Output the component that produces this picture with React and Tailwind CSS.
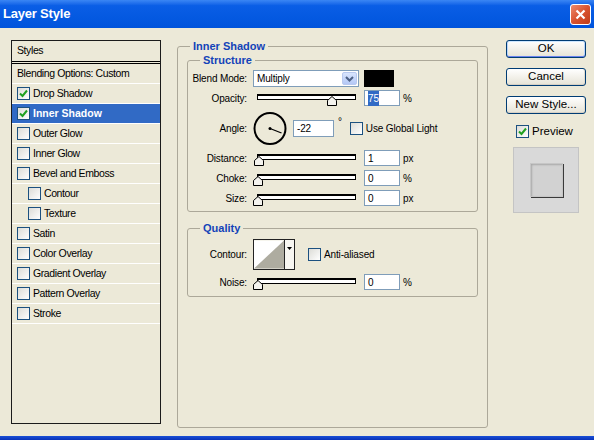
const Check = ({ checked }) => (
  <span className="w-[13px] h-[13px] shrink-0 border border-[#1c5180] bg-linear-to-br from-[#dcdcd7] to-white flex items-center justify-center">
    {checked && (
      <svg width="9" height="9" viewBox="0 0 9 9">
        <path d="M1 4.5 L3.5 7 L8 1.5" stroke="#21a121" strokeWidth="2" fill="none" />
      </svg>
    )}
  </span>
);

const styles = [
  { label: "Drop Shadow", checked: true },
  { label: "Inner Shadow", checked: true, active: true },
  { label: "Outer Glow" },
  { label: "Inner Glow" },
  { label: "Bevel and Emboss" },
  { label: "Contour", sub: true },
  { label: "Texture", sub: true },
  { label: "Satin" },
  { label: "Color Overlay" },
  { label: "Gradient Overlay" },
  { label: "Pattern Overlay" },
  { label: "Stroke" },
];

const Slider = ({ value }) => (
  <div className="relative w-[104px] h-[16px] shrink-0">
    <div className="absolute left-[4px] right-[1px] top-[4px] h-[6px] border border-black border-t-2 bg-white" />
    <svg className="absolute top-[6px]" style={{ left: value * 0.98 }} width="10" height="10" viewBox="0 0 10 10">
      <path d="M0.5 9.5 V4.5 L5 0.5 L9.5 4.5 V9.5 Z" fill="#f4f3ee" stroke="#000" />
    </svg>
  </div>
);

const Field = ({ children }) => (
  <div className="ml-[7px] w-[36px] h-[16px] shrink-0 border border-[#7f9db9] bg-white flex items-center pl-[3px]">
    {children}
  </div>
);

const Row = ({ label, className = "", children }) => (
  <div className={`flex items-center ${className}`}>
    <span className="w-[59px] text-right shrink-0">{label}</span>
    <div className="ml-[6px] flex items-center">{children}</div>
  </div>
);

const SliderRow = ({ label, value, unit, className }) => (
  <Row label={label} className={className}>
    <Slider value={value} />
    <Field>{value}</Field>
    <span className="ml-[3px]">{unit}</span>
  </Row>
);

const Legend = ({ children, className = "" }) => (
  <legend className={`px-[3px] font-bold text-[#1343b8] text-[11px] leading-[13px] tracking-normal ${className}`}>
    {children}
  </legend>
);

const Button = ({ children, main }) => (
  <div
    className={`w-[80px] h-[18px] rounded-[3px] border border-[#003c74] bg-linear-to-b from-white to-[#e6e3d6] flex items-center justify-center text-[11.5px] ${
      main ? "shadow-[inset_0_1px_0_#cee7ff,inset_0_-1px_0_#6982ee,inset_1px_0_0_#b8d4fc,inset_-1px_0_0_#b8d4fc]" : "shadow-[inset_0_-1px_0_#d6d0c5,inset_-1px_0_0_#e0dcd0]"
    }`}
  >
    {children}
  </div>
);

export default function App() {
  return (
    <div className="w-[594px] h-[440px] bg-[#ece9d8] flex flex-col overflow-hidden text-black [font-family:'Liberation_Sans',Arial,sans-serif]">
      {/* title bar */}
      <div className="h-[28px] shrink-0 flex items-center justify-between pl-[3px] pr-[3px] bg-linear-to-b from-[#3a86f4] via-[#0a5ee6] via-20% to-[#0054dc]">
        <span className="text-white font-bold text-[13px] tracking-[-0.2px]">Layer Style</span>
        <div className="w-[21px] h-[21px] rounded-[3px] border border-white bg-linear-to-br from-[#ec8a6b] via-[#d9532f] to-[#c03c18] flex items-center justify-center">
          <svg width="11" height="11" viewBox="0 0 11 11">
            <path d="M1.5 1.5 L9.5 9.5 M9.5 1.5 L1.5 9.5" stroke="#fff" strokeWidth="2.2" />
          </svg>
        </div>
      </div>

      <div className="flex-1 flex items-start pl-[11px] pt-[12px]">
        {/* styles list */}
        <div className="w-[150px] h-[384px] shrink-0 border border-[#1b1b1b] text-[10.5px] tracking-[-0.4px]">
          <div className="h-[23px] border-b-[3px] border-double border-black flex items-center pl-[5px]">Styles</div>
          <div className="h-[20px] border-b border-white flex items-center pl-[5px]">Blending Options: Custom</div>
          {styles.map((s) => (
            <div
              key={s.label}
              className={`h-[20px] border-b border-white flex items-center gap-[3px] ${s.sub ? "pl-[16px]" : "pl-[5px]"} ${
                s.active ? "bg-[#316ac5] text-white font-bold tracking-[0px]" : ""
              }`}
            >
              <Check checked={s.checked} />
              <span>{s.label}</span>
            </div>
          ))}
        </div>

        {/* inner shadow settings */}
        <fieldset className="ml-[16px] w-[311px] h-[388px] shrink-0 border border-[#aca899] rounded-[3px] px-[9px] text-[10px] tracking-[-0.15px]">
          <Legend className="ml-[3px]">Inner Shadow</Legend>

          <fieldset className="mt-[1px] border border-[#aca899] rounded-[3px] pt-[3px] pb-[5px]">
            <Legend className="ml-[12px]">Structure</Legend>
            <Row label="Blend Mode:">
              <div className="w-[106px] h-[17px] border border-[#7f9db9] bg-white flex items-center justify-between pl-[3px] pr-[1px]">
                <span>Multiply</span>
                <div className="w-[15px] h-[13px] rounded-[2px] border border-[#b9c9ef] bg-linear-to-b from-[#d9e5fd] to-[#b4c8f6] flex items-center justify-center">
                  <svg width="9" height="6" viewBox="0 0 9 6">
                    <path d="M1 1 L4.5 4.5 L8 1" stroke="#4d6185" strokeWidth="2" fill="none" />
                  </svg>
                </div>
              </div>
              <div className="ml-[5px] w-[30px] h-[17px] bg-black" />
            </Row>
            <Row label="Opacity:" className="mt-[3px]">
              <Slider value={75} />
              <Field>
                <span className="bg-[#316ac5] text-white">75</span>
              </Field>
              <span className="ml-[3px]">%</span>
            </Row>
            <Row label="Angle:" className="mt-[6px]">
              <svg width="34" height="33" viewBox="0 0 34 33" className="shrink-0">
                <circle cx="17" cy="16.5" r="15.5" fill="none" stroke="#000" strokeWidth="2" />
                <path d="M17 16.5 L28.5 21" stroke="#000" strokeWidth="1.3" />
                <circle cx="17" cy="16.5" r="1.5" fill="#000" />
              </svg>
              <div className="ml-[6px] w-[41px] h-[17px] border border-[#7f9db9] bg-white flex items-center pl-[3px]">-22</div>
              <span className="ml-[4px] self-start mt-[5px] leading-[10px]">°</span>
              <span className="ml-[8px]">
                <Check />
              </span>
              <span className="ml-[3px]">Use Global Light</span>
            </Row>
            <SliderRow label="Distance:" value={1} unit="px" className="mt-[5px]" />
            <SliderRow label="Choke:" value={0} unit="%" className="mt-[4px]" />
            <SliderRow label="Size:" value={0} unit="px" className="mt-[4px]" />
          </fieldset>

          <fieldset className="mt-[10px] border border-[#aca899] rounded-[3px] pt-[4px] pb-[6px]">
            <Legend className="ml-[12px]">Quality</Legend>
            <Row label="Contour:">
              <div className="w-[42px] h-[31px] border border-[#222] flex">
                <svg width="31" height="29" viewBox="0 0 31 29" className="border-r border-[#222]">
                  <rect width="31" height="29" fill="#fff" />
                  <path d="M0 29 L31 0 L31 29 Z" fill="#aeaca0" />
                </svg>
                <div className="flex-1 bg-[#f7f6f1] flex items-start justify-center pt-[7px]">
                  <svg width="5" height="3" viewBox="0 0 5 3">
                    <path d="M0 0 H5 L2.5 3 Z" fill="#000" />
                  </svg>
                </div>
              </div>
              <span className="ml-[13px]">
                <Check />
              </span>
              <span className="ml-[3px]">Anti-aliased</span>
            </Row>
            <SliderRow label="Noise:" value={0} unit="%" className="mt-[4px]" />
          </fieldset>
        </fieldset>

        {/* buttons */}
        <div className="ml-[18px] w-[80px] flex flex-col">
          <Button main>OK</Button>
          <div className="mt-[10px]">
            <Button>Cancel</Button>
          </div>
          <div className="mt-[10px]">
            <Button>New Style...</Button>
          </div>
          <div className="mt-[9px] ml-[10px] flex items-center gap-[3px] text-[11.5px]">
            <Check checked />
            <span>Preview</span>
          </div>
          <div className="mt-[7px] ml-[7px] w-[66px] h-[66px] bg-[#d9d9d9] border border-[#c4c4c4] flex items-center justify-center">
            <div className="w-[33px] h-[34px] bg-[#d2d2d2] border border-[#c6c6c6] shadow-[1px_1px_0_#3a3a3a,inset_1px_1px_2px_#a8a8a8]" />
          </div>
        </div>
      </div>

      <div className="h-[4px] shrink-0 bg-linear-to-b from-[#1a4fd6] to-[#0831b8]" />
    </div>
  );
}
